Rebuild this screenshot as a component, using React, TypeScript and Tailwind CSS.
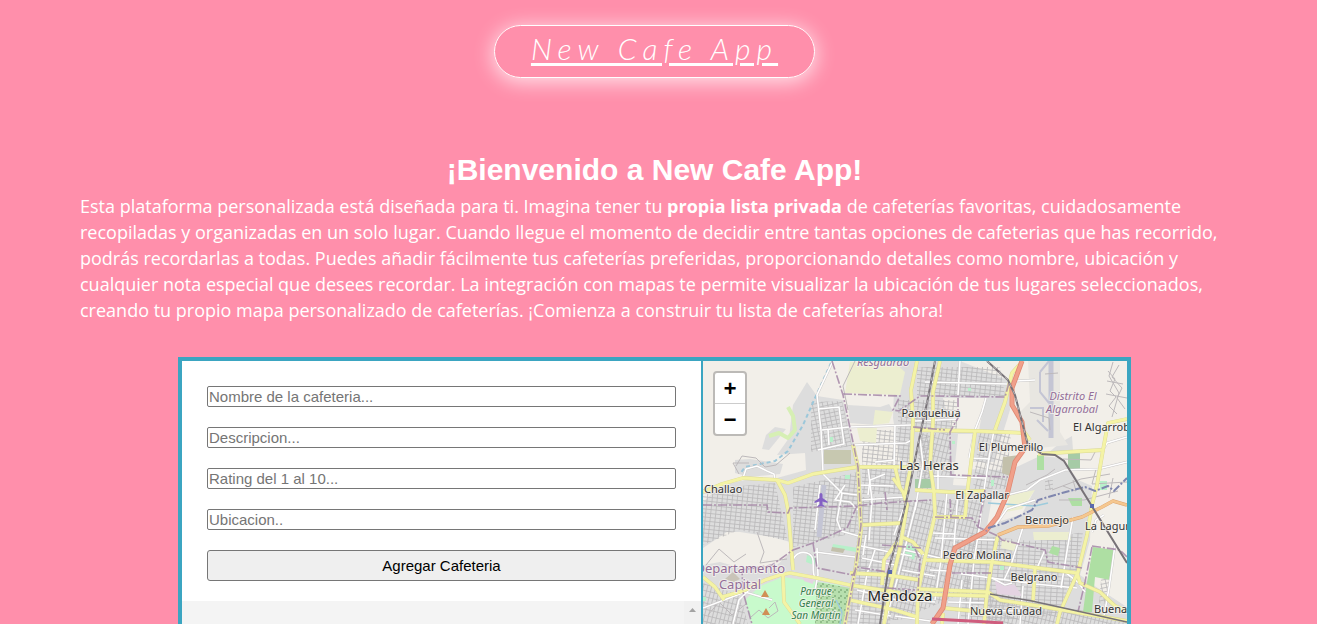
import React from "react";

const fields = [
  { id: "nombre", placeholder: "Nombre de la cafeteria..." },
  { id: "descripcion", placeholder: "Descripcion..." },
  { id: "rating", placeholder: "Rating del 1 al 10..." },
  { id: "ubicacion", placeholder: "Ubicacion.." },
];

const yellowRoads = [
  "M703 492L722 484L743 478L777 480L788 483L813 474L857 467L900 467L917 468",
  "M777 480L785 495L788 510L791 545L793 570",
  "M917 361L911 390L913 420L911 466L905 495",
  "M940 361L933 392L933 422L930 465L934 492L935 515L925 558L918 592L917 624",
  "M893 478L903 492L907 505L900 548L890 590L884 624",
  "M897 542L884 560L882 585",
  "M895 467L900 488",
  "M915 430L975 431L1025 433L1030 440",
  "M1022 362L1012 373L1005 402L995 430",
  "M975 432L967 495L965 517L935 517",
  "M915 490L950 492L985 491",
  "M1038 454L1068 452L1103 450L1108 423L1127 419",
  "M1103 450L1097 485L1092 505L1087 535L1078 572L1060 612L1057 624",
  "M925 560L992 562L1038 568L1077 573L1080 583L1100 592L1115 606L1127 611",
  "M917 589L988 592L1000 600L1045 607L1127 621",
  "M917 594L988 596",
  "M998 535L992 562L987 593L984 624",
  "M1035 568L1033 602",
  "M722 597L743 591L765 580L780 575L790 573L817 578L850 585L900 593",
  "M703 577L715 587L724 600",
  "M850 573L887 575L920 580",
  "M862 525L902 523",
  "M850 600L895 610L917 617",
  "M783 575L784 602L800 624",
  "M943 608L985 612M943 613L942 624",
  "M902 537L913 542L923 554",
];

const whiteRoads = [
  "M832 363L817 395L821 430L823 472",
  "M818 409L839 407L844 444L818 450M822 430L849 427L912 425",
  "M828 429L829 445M853 445L906 443L912 440M895 425L894 467",
  "M743 478L746 469L757 466L767 471L774 474L775 480",
  "M823 474L842 493L857 495M842 493L837 520L841 531L862 537",
  "M857 467L868 467L872 500L869 540M875 462L895 460",
  "M858 485L893 486M861 500L905 497M861 546L895 553L912 556M815 552L855 557",
  "M793 570C789 560 797 550 807 553C818 557 810 568 815 578M817 548L818 575L815 590",
  "M820 485L815 530M845 485L835 500L850 502L858 510",
  "M925 382L1007 384M960 361L958 395M915 421L958 419",
  "M986 398L982 412L975 430L969 458M919 430L923 464L915 510",
  "M994 430L989 458L984 490L979 530L974 560L968 624",
  "M958 492L954 545M947 492L941 560L935 600M935 538L998 540M933 533L955 534",
  "M971 458L990 459M930 476L985 478M938 468L938 490",
  "M930 570L948 571M955 573L1035 584L1077 588M962 580L958 624M955 610L1020 611M948 602L987 603",
  "M1023 527L1011 565L1004 580M1073 517L1068 545L1061 588M1045 550L1037 568",
  "M1035 500L1007 509L995 526M1007 495L1027 490L1040 480L1065 470L1098 469L1127 462",
  "M1115 545L1109 588L1104 616M1092 532L1096 520L1104 515M1103 450L1107 443L1127 437",
  "M703 608L745 592L772 600M733 624L739 600L753 586",
  "M875 550L867 574L858 624M903 510L894 535M917 500L897 580L885 624",
  "M862 558L895 565M857 590L897 600M855 610L891 616M866 535L863 555",
  "M905 550L940 558M902 570L935 576M898 600L935 602M895 616L930 621",
  "M992 578L1005 585L1012 583M1066 573L1078 582L1085 592M1023 586L1020 624",
  "M1035 380L1016 381M868 495L870 480L885 474",
];

const smallRoads = [
  "M855 361L843 386L848 410M736 466L742 456L756 458L765 467L776 465L790 453M739 474L733 463L749 463",
  "M1108 371L1115 379L1110 391L1116 397L1109 406L1117 414M1119 365L1112 377L1122 388L1117 398L1125 409M1107 381L1123 384M1106 394L1127 398M1113 362L1109 376L1119 393L1112 417",
  "M1030 412L1049 418L1050 430M1045 374L1058 373M1026 485L1047 475L1055 469M1052 490L1081 479L1110 474M1059 500L1084 500L1118 491",
  "M757 532L764 552L760 563L787 559M706 565L719 549L734 562L746 554M708 615L719 602L732 615L746 604M769 608L775 602L778 611L768 618L759 610L751 617",
  "M1096 469L1092 484L1127 482M1113 478L1109 498M1063 459L1091 460L1096 450M1063 486L1076 491L1073 480",
];

const boundaries = [
  "M832 361L843 395L853 442L858 467L861 525L855 572L845 624",
  "M843 394L900 396L893 410L899 411L920 396L932 396L1005 397L1009 383",
  "M958 398L958 418L950 432L951 475L1008 477M913 427L945 430",
  "M703 505L767 505L768 512L788 513L790 508L857 506L880 503L913 501L932 500",
  "M857 506L847 528L813 543L793 550L772 565L742 570L743 592L752 624",
  "M813 543L817 568L853 575L857 567L887 572",
  "M998 536L1002 540L1045 550L1048 562L1082 568",
  "M1092 547L1085 582L1078 612M1092 546L1120 550L1127 557",
  "M952 573L992 573M935 517L972 518L978 527L998 536M882 545L921 548",
  "M950 499L951 517M885 492L887 510M985 490L978 527",
  "M887 588L915 590M915 549L920 559L918 592",
];

type LabelProps = {
  x: number;
  y: number;
  children: string;
  kind?: "town" | "suburb" | "district" | "park" | "city" | "department";
  anchor?: "start" | "middle" | "end";
};

const labelStyles = {
  town: "fill-[#333333] text-[11px]",
  suburb: "fill-[#333333] text-[13px]",
  city: "fill-[#222222] text-[15px]",
  district: "fill-[#936e98] text-[11px] italic",
  department: "fill-[#936e98] text-[13px]",
  park: "fill-[#34804c] text-[10px] italic",
};

function Label({ x, y, children, kind = "town", anchor = "middle" }: LabelProps) {
  return (
    <text x={x} y={y} textAnchor={anchor} className={labelStyles[kind]}>
      {children}
    </text>
  );
}

function StreetPattern({ id, size, angle, height }: { id: string; size: number; angle: number; height: number }) {
  return (
    <pattern id={id} width={size} height={height} patternUnits="userSpaceOnUse" patternTransform={`rotate(${angle})`}>
      <path d={`M0 .5H${size}M.5 0V${height}`} stroke="#b9b7b9" strokeWidth=".8" />
    </pattern>
  );
}

function CityMap() {
  return (
    <svg
      viewBox="703 361 424 263"
      preserveAspectRatio="xMinYMin slice"
      className="block h-full min-h-[263px] w-full"
      role="img"
      aria-label="Mapa de Mendoza"
      fill="none"
    >
      <defs>
        <StreetPattern id="streetsA" size={5} height={4} angle={6} />
        <StreetPattern id="streetsB" size={4} height={6} angle={14} />
        <StreetPattern id="streetsC" size={5} height={4} angle={-12} />
        <StreetPattern id="streetsD" size={6} height={4} angle={3} />
        <pattern id="wood" width="6" height="6" patternUnits="userSpaceOnUse">
          <path d="M0 1h2v2H0zM4 3h2v2H4z" fill="#91bc8a" />
        </pattern>
      </defs>

      <path fill="#f2efe9" d="M703 361H1127V624H703z" />

      <g fill="#dddddd">
        <path d="M807 382L817 396L843 400L850 430L860 467L1010 470L1040 456L1062 458L1078 480L1092 486L1090 540L1080 575L1127 607V624H703V502L722 485L745 480L777 478L806 470L805 453L777 455L789 438L793 405z" />
        <path d="M775 427L786 429L778 439L769 450L762 449L766 435z" />
        <path d="M895 361H960L1008 380L1010 410L994 462H900L893 418z" />
        <path d="M848 405L880 407L889 404L893 411L875 425L850 423z" />
        <path d="M735 460L750 459L783 464L780 474L750 477L735 473z" />
        <path d="M1060 443L1072 436L1073 451L1048 453z" />
      </g>
      <path fill="#f2efe9" d="M703 548L727 532L740 532L772 537L790 542L790 553L777 565L745 569L720 562L703 565z" />
      <path fill="#f2efe9" d="M943 398H985L979 430H952zM958 434H973L970 486L953 485zM992 498L1034 491L1022 514L987 526z" />
      <path fill="#f2efe9" d="M1096 486L1127 478V607L1084 579L1092 540z" />
      <path fill="#e8e6e1" d="M1028 361H1060V432L1068 445L1030 449L1020 412L1030 402z" />

      <path fill="url(#streetsC)" d="M811 402L842 401L852 446L811 452z" />
      <path fill="url(#streetsA)" d="M862 430H910V494H862zM898 400H957V430H898zM917 367H1000L1005 396H917z" />
      <path fill="url(#streetsB)" d="M919 433H950L951 478H917zM979 433H1011L1006 489H973zM905 500H985L970 590L900 620H880z" />
      <path fill="url(#streetsA)" d="M703 489L775 483L788 541L739 530L703 545zM793 487L858 472V532L793 547z" />
      <path fill="url(#streetsD)" d="M862 497H905L890 624H847zM970 535L1075 545L1062 615L960 623zM1013 545L1083 532L1075 588L1015 582z" />
      <path fill="url(#streetsB)" d="M703 583L740 595L748 624H703zM1029 604L1080 610L1127 621V624H985L989 595z" />
      <path fill="url(#streetsC)" d="M919 436L935 434L932 490L919 490zM1045 480h8v10h-8zM1103 557L1114 555L1107 604L1099 603z" />

      <g fill="#eceed0">
        <path d="M850 362L894 362L905 372L900 395L845 393z" />
        <path d="M875 410L893 412L889 423L873 425zM857 428L877 428L876 443L860 441z" />
        <path d="M1010 495L1035 490L1022 509L1006 512zM1033 532L1071 532L1071 540L1034 540z" />
        <path d="M1002 540L1018 543L1014 551L1001 548z" />
      </g>
      <path stroke="#d6efb4" strokeWidth="4" d="M788 407L793 416L795 430L788 438L779 433L769 436" strokeLinejoin="round" />
      <path fill="#c8facc" d="M745 600L760 586L783 577L840 585L847 596L836 624H752z" />
      <path fill="#b7dfae" d="M817 582L850 588L843 624H815z" />
      <path fill="url(#wood)" d="M817 582L850 588L843 624H815z" />
      <path fill="#aedfa3" d="M1093 547L1115 550L1110 580L1095 577L1092 612H1083L1087 582zM1037 455h7v15h-7zM1052 546l8 2-2 8-9-3zM1068 498h14v8h-10z" />
      <path fill="#a6cba6" d="M1068 452h12v17h-12zM915 479h16v9h-16z" />
      <path fill="#b8f0ca" d="M829 437h4v5h-4zM845 475h5v4h-5zM968 388h3v3h-3zM952 441h3v3h-3zM991 480h3v6h-3zM905 544l12 4-3 12-9-5zM947 567h3v15h-3zM1000 566h4v4h-4zM807 555l10 4-3 6-8-3zM833 544l25 4-1 4-25-4zM1100 481h7v9h-7zM703 597h3v4h-3z" />
      <path fill="#c3c0ab" d="M1003 457L1020 455L1010 476L1002 473zM832 547L845 549L843 553L831 551z" />
      <path fill="#c7c8b0" d="M824 450h27v14h-27z" />
      <path fill="#e4d3e2" d="M995 581L1015 585L1022 596L997 594zM803 574h12l-2 10-9-3zM885 560h7l-4 13-6-2z" />
      <path fill="#c9c4b8" d="M725 579l8-7 7 7-6 3z" />

      <path stroke="#c4c5d4" strokeWidth="5" d="M824 485L819 537M1051 361V438" />
      <path stroke="#c4c5d4" strokeWidth="2" d="M1040 372V392L1049 403M1037 420L1048 431M1040 372L1049 361M1030 408H1043V422" />
      <path stroke="#9dcbdc" strokeWidth="1.5" d="M988 503L1035 506L1048 503M836 600L842 612L840 624" />
      <path stroke="#9bc7da" strokeWidth="2" strokeDasharray="4 3" d="M831 363L815 398L803 425L788 451L775 461L745 467L740 474" />

      <g stroke="#bdb9bb" strokeWidth="1">{smallRoads.map((d) => <path key={d} d={d} />)}</g>
      <g stroke="#c8c6c6" strokeWidth="2.4">{whiteRoads.map((d) => <path key={d} d={d} />)}</g>
      <g stroke="#ffffff" strokeWidth="1.6">{whiteRoads.map((d) => <path key={d} d={d} />)}</g>

      <g strokeLinejoin="round">
        <g stroke="#dad895" strokeWidth="3.8">{yellowRoads.map((d) => <path key={d} d={d} />)}</g>
        <g stroke="#f4f3a5" strokeWidth="3">{yellowRoads.map((d) => <path key={d} d={d} />)}</g>
        <path stroke="#dad895" strokeWidth="3.8" d="M853 445L858 467L861 530L855 572L850 595L845 624" />
        <path stroke="#f0efaa" strokeWidth="3" d="M853 445L858 467L861 530L855 572L850 595L845 624" />
        <path stroke="#dda36d" strokeWidth="3.6" d="M998 535L1018 527L1048 526L1082 517L1102 507L1113 501L1127 505" />
        <path stroke="#f5c78f" strokeWidth="2.6" d="M998 535L1018 527L1048 526L1082 517L1102 507L1113 501L1127 505" />
        <path stroke="#e08872" strokeWidth="5" d="M1022 361L1012 388L1012 405L1022 422L1025 448L1015 462L1007 495L997 517L985 532L955 548L950 565L943 608L932 624" />
        <path stroke="#f0a08a" strokeWidth="3.4" d="M1022 361L1012 388L1012 405L1022 422L1025 448L1015 462L1007 495L997 517L985 532L955 548L950 565L943 608L932 624" />
        <path stroke="#cf5c7d" strokeWidth="3" d="M932 619L970 621L1003 623" />
      </g>

      <g stroke="#a688a8" strokeWidth="1.6" strokeDasharray="9 2 2 2" opacity=".85">
        {boundaries.map((d) => <path key={d} d={d} />)}
      </g>
      <path stroke="#7f86ae" strokeWidth="2" strokeDasharray="8 2 2 2" d="M988 528L1005 523L1032 510L1038 500L1062 493L1085 487L1095 491L1108 486L1114 491L1127 478" />

      <g stroke="#777277" strokeWidth="2">
        <path d="M935 361L928 398L918 445L910 485L900 528L888 572L880 624" />
        <path d="M987 361L1008 380L1015 395L1028 445L1042 454L1055 455L1064 461L1085 495L1127 563" />
        <path strokeWidth="1.4" d="M990 594L1032 601L1127 622" />
      </g>
      <path stroke="#c9c6c9" strokeWidth=".8" strokeDasharray="4 4" d="M935 361L928 398L918 445L910 485L900 528L888 572M987 361L1008 380L1015 395L1028 445L1042 454" />
      <path fill="#5b69ad" d="M888 570h4v4h-4zM1090 504h4v4h-4z" />
      <path
        fill="#8461c4"
        d="M821 493c-1 0-1.500 1-1.500 2v3l-5 3.500v1.500l5-1.500v3l-2 1.500v1l3.500-1 3.500 1v-1l-2-1.500v-3l5 1.500v-1.500l-5-3.500v-3c0-1-.5-2-1.500-2z"
      />
      <path fill="#d08f55" d="M765 590l4 7h-8zM766 608l4 7h-8z" />

      <g
        className="font-['Noto_Sans',sans-serif]"
        stroke="#f5f3ef"
        strokeOpacity=".75"
        strokeWidth="2"
        strokeLinejoin="round"
        paintOrder="stroke"
      >
        <Label x={883} y={366} kind="district">Resguardo</Label>
        <Label x={1073} y={400} kind="district">Distrito El</Label>
        <Label x={1072} y={413} kind="district">Algarrobal</Label>
        <Label x={931} y={417}>Panquehua</Label>
        <Label x={929} y={470} kind="suburb">Las Heras</Label>
        <Label x={1011} y={451}>El Plumerillo</Label>
        <Label x={1073} y={431} anchor="start">El Algarrobal</Label>
        <Label x={982} y={499}>El Zapallar</Label>
        <Label x={704} y={493} anchor="start">Challao</Label>
        <Label x={1047} y={524}>Bermejo</Label>
        <Label x={1085} y={530} anchor="start">La Laguna</Label>
        <Label x={977} y={559}>Pedro Molina</Label>
        <Label x={1034} y={581}>Belgrano</Label>
        <Label x={1094} y={613} anchor="start">Buena Nueva</Label>
        <Label x={1006} y={615}>Nueva Ciudad</Label>
        <Label x={900} y={601} kind="city">Mendoza</Label>
        <Label x={785} y={573} kind="department" anchor="end">Departamento</Label>
        <Label x={740} y={589} kind="department">Capital</Label>
        <Label x={816} y={595} kind="park">Parque</Label>
        <Label x={816} y={607} kind="park">General</Label>
        <Label x={816} y={619} kind="park">San Martín</Label>
      </g>
    </svg>
  );
}

export default function App() {
  return (
    <div className="flex min-h-screen flex-col items-center bg-[#ff8fab] pr-2 font-['Liberation_Sans',Arial,sans-serif] text-white">
      <header className="pt-[25px]">
        <a
          href="#inicio"
          className="flex h-[53px] items-start rounded-full border border-white px-9 font-['Lato',sans-serif] text-[30px] leading-[45px] font-light tracking-[6px] italic underline decoration-[3px] underline-offset-[3px] shadow-[0_3px_20px_1px_rgba(255,255,255,0.75)]"
        >
          New Cafe App
        </a>
      </header>

      <section className="w-full px-20 pt-[74px]">
        <h1 className="text-center text-[30px] leading-9 font-bold">¡Bienvenido a New Cafe App!</h1>
        <p className="mt-[5px] font-['Open_Sans',sans-serif] text-[18px] leading-[26px]">
          Esta plataforma personalizada está diseñada para ti. Imagina tener tu <strong>propia lista privada</strong> de
          cafeterías favoritas, cuidadosamente recopiladas y organizadas en un solo lugar. Cuando llegue el momento de
          decidir entre tantas opciones de cafeterias que has recorrido, podrás recordarlas a todas. Puedes añadir
          fácilmente tus cafeterías preferidas, proporcionando detalles como nombre, ubicación y cualquier nota especial
          que desees recordar. La integración con mapas te permite visualizar la ubicación de tus lugares seleccionados,
          creando tu propio mapa personalizado de cafeterías. ¡Comienza a construir tu lista de cafeterías ahora!
        </p>
      </section>

      <main className="mt-[34px] grid w-full max-w-[953px] flex-1 grid-cols-[521fr_424fr] border-4 border-b-0 border-[#3ba5c1] bg-white text-black">
        <div className="flex min-w-0 flex-col border-r-2 border-[#3ba5c1]">
          <form className="flex flex-col gap-5 px-[25px] pt-[25px] pb-5" onSubmit={(e) => e.preventDefault()}>
            {fields.map((field) => (
              <input
                key={field.id}
                id={field.id}
                type="text"
                aria-label={field.placeholder}
                placeholder={field.placeholder}
                className="h-[21px] w-full rounded-xs border border-[#767676] bg-white px-px text-[15px] leading-[17px] placeholder:text-[#757575]"
              />
            ))}
            <button
              type="submit"
              className="h-[31px] w-full rounded-[3px] border border-[#767676] bg-[#efefef] text-[15px] leading-[17px]"
            >
              Agregar Cafeteria
            </button>
          </form>
          <div className="flex flex-1 justify-end bg-[#f4f4f4]">
            <div className="flex w-[17px] justify-center bg-[#f1f1f1] pt-[7px]">
              <svg viewBox="0 0 7 4" className="h-1 w-[7px]" aria-hidden="true">
                <path d="M3.500 0L7 4H0z" fill="#a3a3a3" />
              </svg>
            </div>
          </div>
        </div>

        <div className="relative min-w-0 overflow-hidden">
          <CityMap />
          <div className="absolute top-2.5 left-2.5 flex flex-col rounded border-2 border-[#bcbab7] bg-white font-['Liberation_Mono',monospace] text-[22px] font-bold">
            <button
              type="button"
              aria-label="Acercar"
              className="flex h-[31px] w-[30px] items-center justify-center border-b border-[#cccccc] pt-1"
            >
              +
            </button>
            <button type="button" aria-label="Alejar" className="flex h-[30px] w-[30px] items-center justify-center pt-1">
              −
            </button>
          </div>
        </div>
      </main>
    </div>
  );
}
